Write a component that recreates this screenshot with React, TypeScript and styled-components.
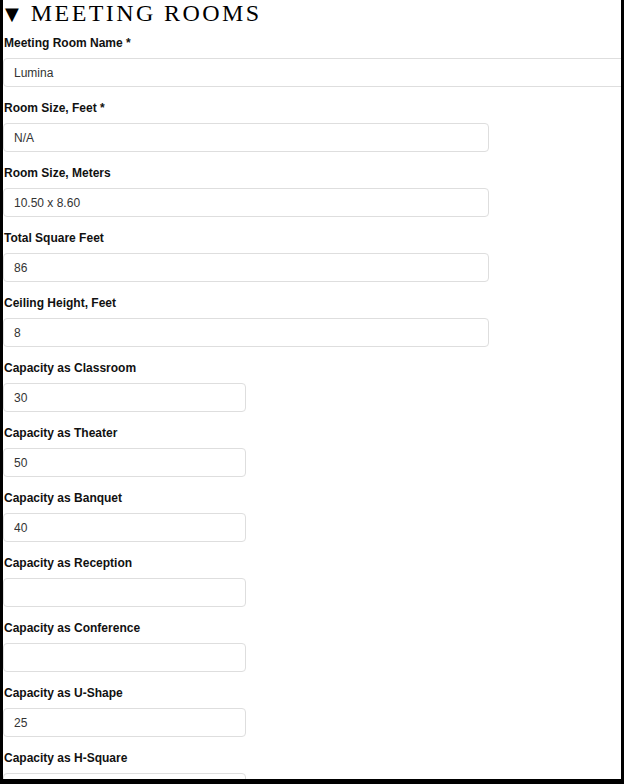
import React from 'react';
import styled, { createGlobalStyle } from 'styled-components';

const GlobalStyle = createGlobalStyle`
  html, body {
    margin: 0;
    padding: 0;
    background: #fff;
  }
`;

const Frame = styled.div`
  box-sizing: border-box;
  width: 624px;
  height: 784px;
  overflow: hidden;
  border-left: 3px solid #000;
  border-right: 3px solid #000;
  border-bottom: 5px solid #000;
  background: #fff;
`;

const Heading = styled.h2`
  height: 26px;
  margin: 0 0 9px;
  padding-left: 2px;
  font-family: 'Liberation Serif', 'Times New Roman', serif;
  font-weight: 400;
  font-size: 24px;
  line-height: 26px;
  letter-spacing: 2.4px;
  color: #000;
  text-transform: uppercase;
  white-space: nowrap;
`;

const Marker = styled.span`
  display: inline-block;
  margin-right: 12px;
  font-family: 'DejaVu Sans', sans-serif;
  font-size: 18px;
  line-height: 1;
  letter-spacing: 0;
  vertical-align: 1px;
`;

const Field = styled.div`
  margin-bottom: 13px;
`;

const Label = styled.label`
  display: block;
  margin: 0 0 7px;
  padding: 1px 0 0 1px;
  font-family: 'Liberation Sans', Arial, sans-serif;
  font-weight: 700;
  font-size: 12px;
  line-height: 15px;
  color: #111;
`;

const widths = {
  full: 'calc(100% + 12px)',
  medium: '486px',
  small: '243px',
};

const Input = styled.input<{ $size: keyof typeof widths }>`
  display: block;
  box-sizing: border-box;
  width: ${(p) => widths[p.$size]};
  height: 29px;
  margin: 0;
  padding: 0 10px;
  border: 1px solid #dedede;
  border-radius: 4px;
  background: #fff;
  font-family: 'Liberation Sans', Arial, sans-serif;
  font-size: 12px;
  color: #333;
  outline: none;
`;

type FieldDef = { label: string; value: string; size: keyof typeof widths };

const fields: FieldDef[] = [
  { label: 'Meeting Room Name *', value: 'Lumina', size: 'full' },
  { label: 'Room Size, Feet *', value: 'N/A', size: 'medium' },
  { label: 'Room Size, Meters', value: '10.50 x 8.60', size: 'medium' },
  { label: 'Total Square Feet', value: '86', size: 'medium' },
  { label: 'Ceiling Height, Feet', value: '8', size: 'medium' },
  { label: 'Capacity as Classroom', value: '30', size: 'small' },
  { label: 'Capacity as Theater', value: '50', size: 'small' },
  { label: 'Capacity as Banquet', value: '40', size: 'small' },
  { label: 'Capacity as Reception', value: '', size: 'small' },
  { label: 'Capacity as Conference', value: '', size: 'small' },
  { label: 'Capacity as U-Shape', value: '25', size: 'small' },
  { label: 'Capacity as H-Square', value: '', size: 'small' },
];

export default function App() {
  return (
    <>
      <GlobalStyle />
      <Frame>
        <Heading>
          <Marker>▼</Marker>Meeting Rooms
        </Heading>
        {fields.map((f, i) => (
          <Field key={f.label}>
            <Label htmlFor={`room-field-${i}`}>{f.label}</Label>
            <Input id={`room-field-${i}`} $size={f.size} defaultValue={f.value} readOnly />
          </Field>
        ))}
      </Frame>
    </>
  );
}
